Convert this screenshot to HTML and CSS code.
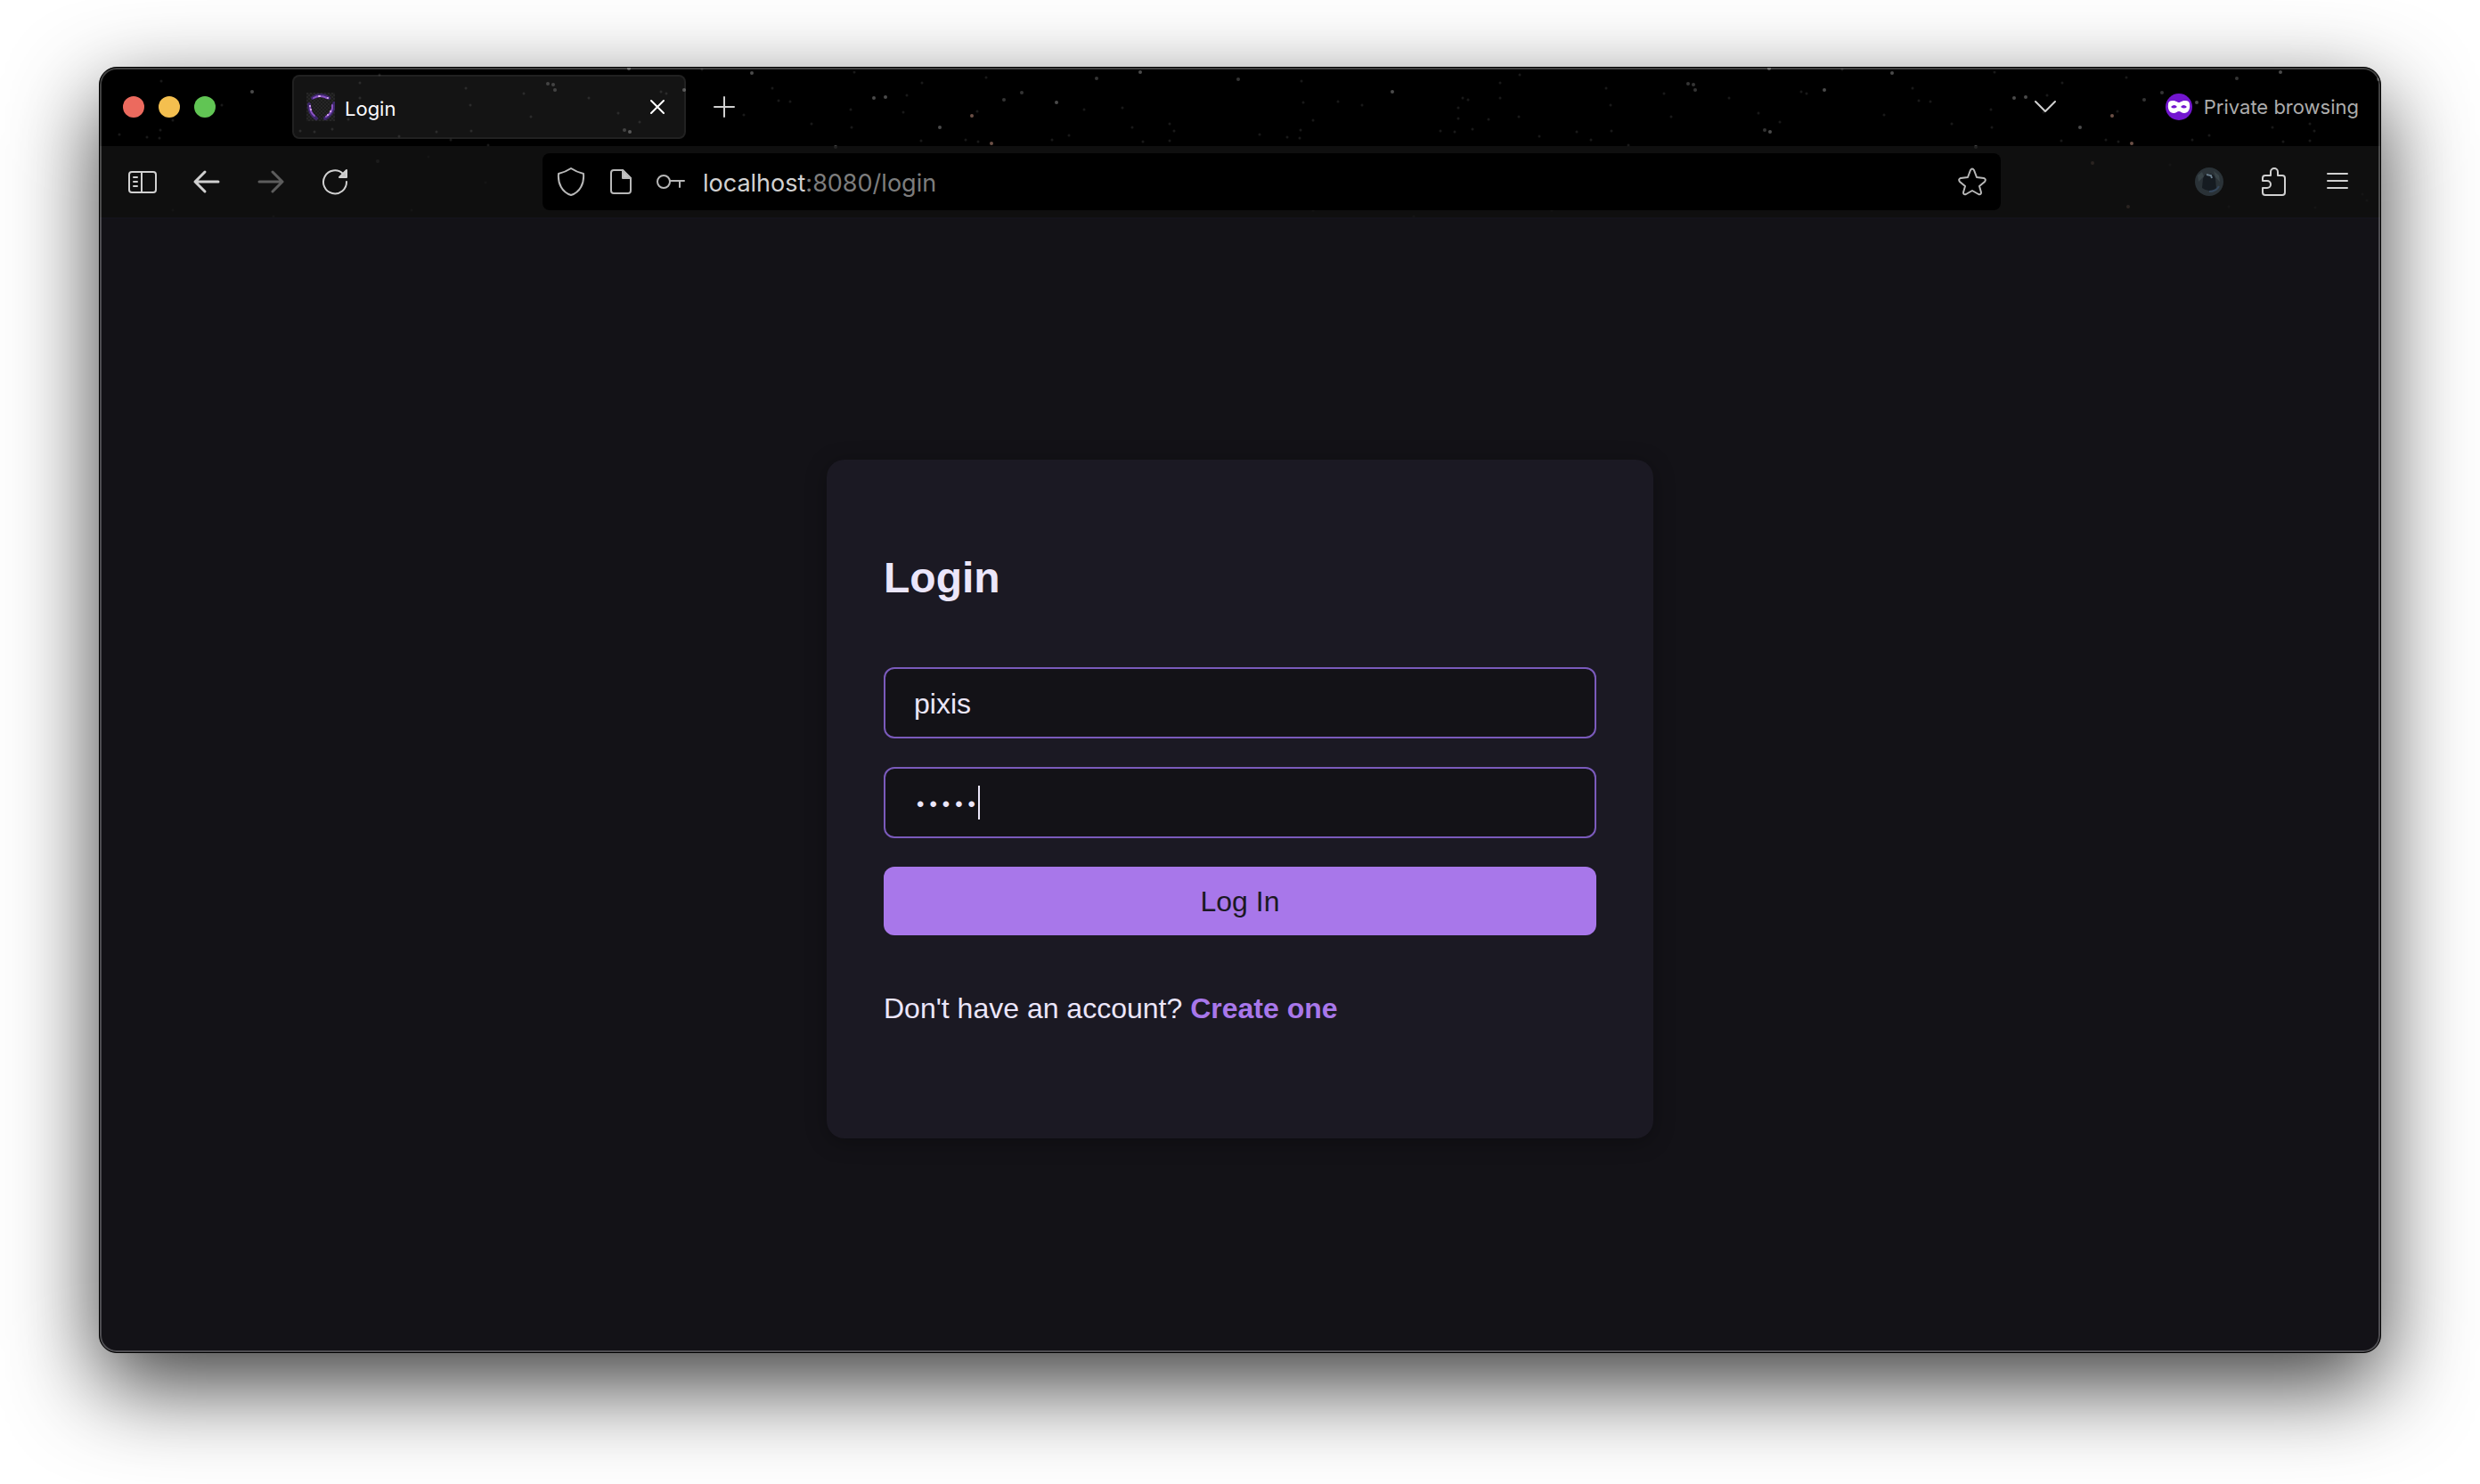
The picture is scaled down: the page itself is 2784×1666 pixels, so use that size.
FILE: index.html
```html
<!DOCTYPE html>
<html lang="en">
<head>
<meta charset="utf-8">
<title>Login</title>
<link rel="stylesheet" href="styles.css">
</head>
<body class="desktop">
<div class="window">
  <svg class="stars" aria-hidden="true">
    <defs>
      <pattern id="sky" width="1280" height="172" patternUnits="userSpaceOnUse">
        <path class="star faint" d="M69 15h0M82 59h0M67 79h0M22 75h0M314 8h0M411 23h0M549 34h0M476 29h0M676 2h0M630 27h0M636 29h0M484 55h0M416 42h0M417 71h0M378 72h0M241 72h0M225 71h0M261 69h0M336 77h0M433 129h0M350 160h0M82 160h0M195 167h0M369 100h0M292 17h0M292 34h0M436 87h0M582 51h0M606 61h0M755 23h0M775 38h0M847 5h0M923 17h0M843 47h0M906 31h0M902 50h0M985 49h0M972 81h0M986 83h0M799 63h0M844 67h0M922 82h0M995 11h0M1105 47h0M1148 45h0M1159 67h0M1201 63h0M1206 71h0M1201 82h0M1171 83h0M1069 81h0M1088 76h0M71 39h0M68 70h0M53 78h0M137 42h0M110 38h0M1044 109h0M1110 156h0M1207 157h0M1260 142h0M1265 149h0M250 34h0M256 36h0M245 45h0M245 57h0M279 58h0M313 55h0M394 81h0M762 37h0M723 53h0"/>
        <path class="star dim" d="M503 18h0M509 19h0M511 25h0M589 70h0M312 105h0M1035 28h0M1015 36h0M1119 12h0M1278 13h0"/>
        <path class="star bright" d="M171 27h0M594 1h0M732 6h0M656 25h0M595 72h0M869 34h0M882 33h0M943 67h0M1074 39h0M1168 5h0M826 89h0"/>
        <path class="star warm" d="M979 54h0M1001 85h0M957 107h0M997 156h0"/>
      </pattern>
    </defs>
    <rect width="100%" height="100%" fill="url(#sky)"/>
  </svg>

  <header class="chrome">
    <div class="tabbar">
      <div class="lights">
        <button class="light red" aria-label="Close"></button>
        <button class="light yellow" aria-label="Minimize"></button>
        <button class="light green" aria-label="Zoom"></button>
      </div>
      <div class="tab">
        <svg class="favicon" viewBox="0 0 32 32" aria-hidden="true">
          <defs>
            <pattern id="check" width="4" height="4" patternUnits="userSpaceOnUse"><rect width="4" height="4" fill="#1b1b1b"/><path d="M0 0h2v2H0zM2 2h2v2H2z" fill="#262626"/></pattern>
          </defs>
          <rect width="32" height="32" fill="url(#check)"/>
          <g fill="none" stroke-linecap="round">
            <path class="glow" d="M7 6Q15 0 25 6M3 13Q3 24 11 29M31 12Q31 23 21 29"/>
            <path class="ring" d="M8 6Q15 2 23 6M4 15Q4 22 9 26M29 14Q30 22 22 27"/>
            <path class="spark" d="M14 4h1M24 6h0M4 15h0M5 19h0M24 25h0M27 21h0"/>
          </g>
        </svg>
        <span class="tab-title">Login</span>
        <button class="icon-btn small" aria-label="Close tab">
          <svg class="icon white" width="20" height="20" viewBox="0 0 20 20"><path d="M3 3l14 14M17 3L3 17"/></svg>
        </button>
      </div>
      <button class="icon-btn new-tab" aria-label="New tab">
        <svg class="icon" width="32" height="32" viewBox="0 0 32 32"><path d="M16 5v22M5 16h22"/></svg>
      </button>
      <button class="icon-btn list-tabs" aria-label="List all tabs">
        <svg class="icon" width="32" height="32" viewBox="0 0 32 32"><path d="M5 10l11 11 11-11"/></svg>
      </button>
      <div class="private">
        <svg width="30" height="30" viewBox="0 0 30 30" aria-hidden="true">
          <circle cx="15" cy="15" r="15" fill="#7316d0"/>
          <path fill="#fff" fill-rule="evenodd" d="M3 12Q3 8 8 8C12 8 13 10 15 10S18 8 22 8Q27 8 27 12C28 18 25 22 21 22C18 22 17 20 15 20S12 22 9 22C5 22 2 18 3 12zM6 15Q9 18 13 15Q10 11 6 15zM17 15Q21 18 24 15Q20 11 17 15z"/>
        </svg>
        <span>Private browsing</span>
      </div>
    </div>

    <div class="toolbar">
      <div class="nav">
        <button class="icon-btn" aria-label="Sidebar">
          <svg class="icon" width="32" height="32" viewBox="0 0 32 32"><rect x="1" y="5" width="30" height="23" rx="3"/><path d="M15 5v23M6 11h4M6 16h4M6 21h4"/></svg>
        </button>
        <button class="icon-btn" aria-label="Back">
          <svg class="icon heavy" width="32" height="32" viewBox="0 0 32 32"><path d="M29 16H3M14 5L3 16l11 11"/></svg>
        </button>
        <button class="icon-btn" aria-label="Forward" disabled>
          <svg class="icon heavy" width="32" height="32" viewBox="0 0 32 32"><path d="M3 16h26M18 5l11 11-11 11"/></svg>
        </button>
        <button class="icon-btn" aria-label="Reload">
          <svg class="icon" width="32" height="32" viewBox="0 0 32 32"><path d="M29 16A13 13 0 1 1 25 7"/><path class="solid" d="M29 3v8h-8z"/></svg>
        </button>
      </div>
      <div class="urlbar">
        <button class="icon-btn small" aria-label="Tracking protection">
          <svg class="icon soft" width="32" height="32" viewBox="0 0 32 32"><path d="M16 1Q22 5 30 7C31 18 26 28 16 31C6 28 1 18 2 7Q10 5 16 1z"/></svg>
        </button>
        <button class="icon-btn small" aria-label="Site information">
          <svg class="icon soft" width="32" height="32" viewBox="0 0 32 32"><path d="M18 3H8a3 3 0 0 0-3 3v20a3 3 0 0 0 3 3h16a3 3 0 0 0 3-3V12z"/><path class="solid" d="M18 3v9h9z"/></svg>
        </button>
        <button class="icon-btn small" aria-label="Saved password">
          <svg class="icon soft" width="32" height="32" viewBox="0 0 32 32"><circle cx="8" cy="16" r="7"/><path d="M15 15h16M26 15v7"/></svg>
        </button>
        <span class="url">localhost<span class="path">:8080/login</span></span>
        <button class="icon-btn small" aria-label="Bookmark">
          <svg class="icon soft" width="32" height="32" viewBox="0 0 32 32"><path d="M14 3Q16 0 18 3L21 11 29 12Q32 13 30 16L24 21 26 28Q26 31 23 30L16 26 9 30Q6 31 6 28L8 21 2 16Q0 13 3 12L11 11z"/></svg>
        </button>
      </div>
      <div class="tools">
        <button class="icon-btn" aria-label="Profile">
          <svg width="32" height="32" viewBox="0 0 32 32">
            <circle cx="16" cy="16" r="16" fill="#2a3237"/>
            <path d="M9 13Q10 7 16 7T23 13L24 24Q16 29 8 23z" fill="#151b21"/>
            <path d="M3 9l5-4 2 5-6 6zM21 4l6 5 1 7-5-5z" fill="#384347"/>
            <path d="M13 8l5 1 1 3" fill="none" stroke="#6b7f8e" stroke-width="2"/>
            <path d="M16 27q8 0 11-6" fill="none" stroke="#33455a" stroke-width="2"/>
          </svg>
        </button>
        <button class="icon-btn" aria-label="Extensions">
          <svg class="icon" width="32" height="32" viewBox="0 0 32 32"><path d="M4 15V12Q4 9 7 9H13V5a4 4 0 0 1 8 0V9H26Q29 9 29 12V28Q29 31 26 31H7Q4 31 4 28V23H9a4 4 0 0 0 0-8z"/></svg>
        </button>
        <button class="icon-btn" aria-label="Menu">
          <svg class="icon" width="32" height="32" viewBox="0 0 32 32"><path d="M5 7h22M5 15h22M5 23h22"/></svg>
        </button>
      </div>
    </div>
  </header>

  <main class="page">
    <section class="card">
      <h1 class="title">Login</h1>
      <form class="form">
        <input class="field" type="text" aria-label="Username" value="pixis">
        <div class="password">
          <input class="field secret" type="password" aria-label="Password" value="abcde">
          <span class="caret"></span>
        </div>
        <button class="submit" type="button">Log In</button>
      </form>
      <p class="signup">Don't have an account? <a href="#">Create one</a></p>
    </section>
  </main>
</div>
</body>
</html>
```

FILE: styles.css
```css
* { box-sizing: border-box; }

.desktop {
  display: flex;
  min-height: 100vh;
  margin: 0;
  padding: 75px 111px 147px;
  background: #fff;
  font-family: "Liberation Sans", Arial, sans-serif;
}

.window {
  position: relative;
  display: flex;
  flex: 1;
  flex-direction: column;
  overflow: hidden;
  border: 1px solid #000;
  border-radius: 20px;
  background: #000;
  box-shadow: 0 36px 100px rgba(0, 0, 0, .76);
}

/* light rim drawn over the window's content */
.window::after {
  content: "";
  position: absolute;
  inset: 0;
  border: 2px solid rgba(255, 255, 255, .25);
  border-radius: 19px;
  pointer-events: none;
}

.stars {
  position: absolute;
  top: 0;
  left: 0;
  width: 100%;
  height: 170px;
}

.star { fill: none; stroke-width: 3; stroke-linecap: round; }
.faint { stroke: #191919; }
.dim { stroke: #343434; stroke-width: 4; }
.bright { stroke: #4a4a4a; stroke-width: 4; }
.warm { stroke: #6c5046; stroke-width: 4; }

.chrome {
  position: relative;
  font-family: Inter, "Liberation Sans", sans-serif;
}

.tabbar {
  display: flex;
  align-items: center;
  height: 88px;
  padding: 0 24px 0 26px;
}

.lights { display: flex; gap: 16px; margin-right: 86px; }

.light {
  width: 24px;
  height: 24px;
  padding: 0;
  border: 0;
  border-radius: 50%;
}

.red { background: #ec6a5e; }
.yellow { background: #f4bf4f; }
.green { background: #61c554; }

.tab {
  display: flex;
  align-items: center;
  width: 442px;
  height: 72px;
  padding: 0 14px;
  border: 2px solid rgba(255, 255, 255, .06);
  border-radius: 8px;
  background: rgba(255, 255, 255, .08);
}

.favicon { width: 32px; height: 32px; }
.glow { stroke: #4a2a8a; stroke-width: 4; opacity: .7; }
.ring { stroke: #8a52c4; stroke-width: 2; }
.spark { stroke: #e3b6f5; stroke-width: 2; }

.tab-title {
  flex: 1;
  padding: 3px 0 0 11px;
  color: #fbfbfe;
  font-size: 22px;
  line-height: 28px;
}

.icon-btn {
  display: grid;
  place-items: center;
  width: 56px;
  height: 56px;
  padding: 0;
  border: 0;
  background: none;
}

.icon-btn.small { width: 32px; }
.icon-btn:disabled { opacity: .4; }

.icon {
  display: block;
  fill: none;
  stroke: #d0d0d0;
  stroke-width: 2;
  stroke-linecap: round;
  stroke-linejoin: round;
}

.heavy { stroke-width: 3; }
.white { stroke: #fff; }
.soft { stroke: #b8b8b8; }
.icon .solid { fill: #c4c4c4; }

.new-tab { margin-left: 15px; }
.list-tabs { margin-left: auto; }

.private {
  display: flex;
  align-items: center;
  gap: 13px;
  margin-left: 107px;
  color: #acacac;
  font-size: 22px;
  line-height: 28px;
}

.toolbar {
  display: flex;
  align-items: center;
  height: 82px;
  padding: 0 20px;
  border-bottom: 2px solid #14131a;
  background: rgba(20, 20, 20, .75);
}

.nav, .tools { display: flex; gap: 16px; }
.nav { width: 477px; }

.urlbar {
  display: flex;
  flex: 1;
  align-items: center;
  height: 64px;
  padding: 0 16px;
  border-radius: 8px;
  background: #000;
}

.urlbar .small + .small { margin-left: 24px; }

.url {
  flex: 1;
  padding: 3px 0 0 20px;
  color: #d2d2d2;
  font-size: 27px;
  line-height: 36px;
}

.path { color: #7d7d7d; }
.tools { margin-left: 206px; }

.page {
  display: flex;
  flex: 1;
  align-items: center;
  justify-content: center;
  padding-top: 30px;
  background: #131217;
}

.card {
  width: 928px;
  padding: 105px 64px 128px;
  border-radius: 20px;
  background: #1b1923;
  box-shadow: 0 4px 24px rgba(0, 0, 0, .3);
  color: #ebe6fa;
  font-size: 32px;
  line-height: 36px;
}

.title {
  margin: 0 0 72px;
  font-size: 48px;
  line-height: 56px;
}

.form { display: grid; gap: 32px; }
.password { position: relative; }

.field {
  display: block;
  width: 100%;
  height: 80px;
  padding: 2px 32px 0;
  border: 2px solid #7a5abb;
  border-radius: 12px;
  outline: 0;
  background: #131217;
  color: inherit;
  font: inherit;
}

.secret {
  padding-top: 6px;
  font-family: "Liberation Mono", monospace;
  font-size: 24px;
}

.caret {
  position: absolute;
  top: 21px;
  left: 106px;
  width: 2px;
  height: 38px;
  background: #ebe6fa;
}

.submit {
  height: 77px;
  padding: 1px 0 0;
  border: 0;
  border-radius: 12px;
  background: #a877ea;
  color: #1b1923;
  font: inherit;
}

.signup { margin: 64px 0 0; }
.signup a { color: #a877ea; font-weight: 700; text-decoration: none; }
```
